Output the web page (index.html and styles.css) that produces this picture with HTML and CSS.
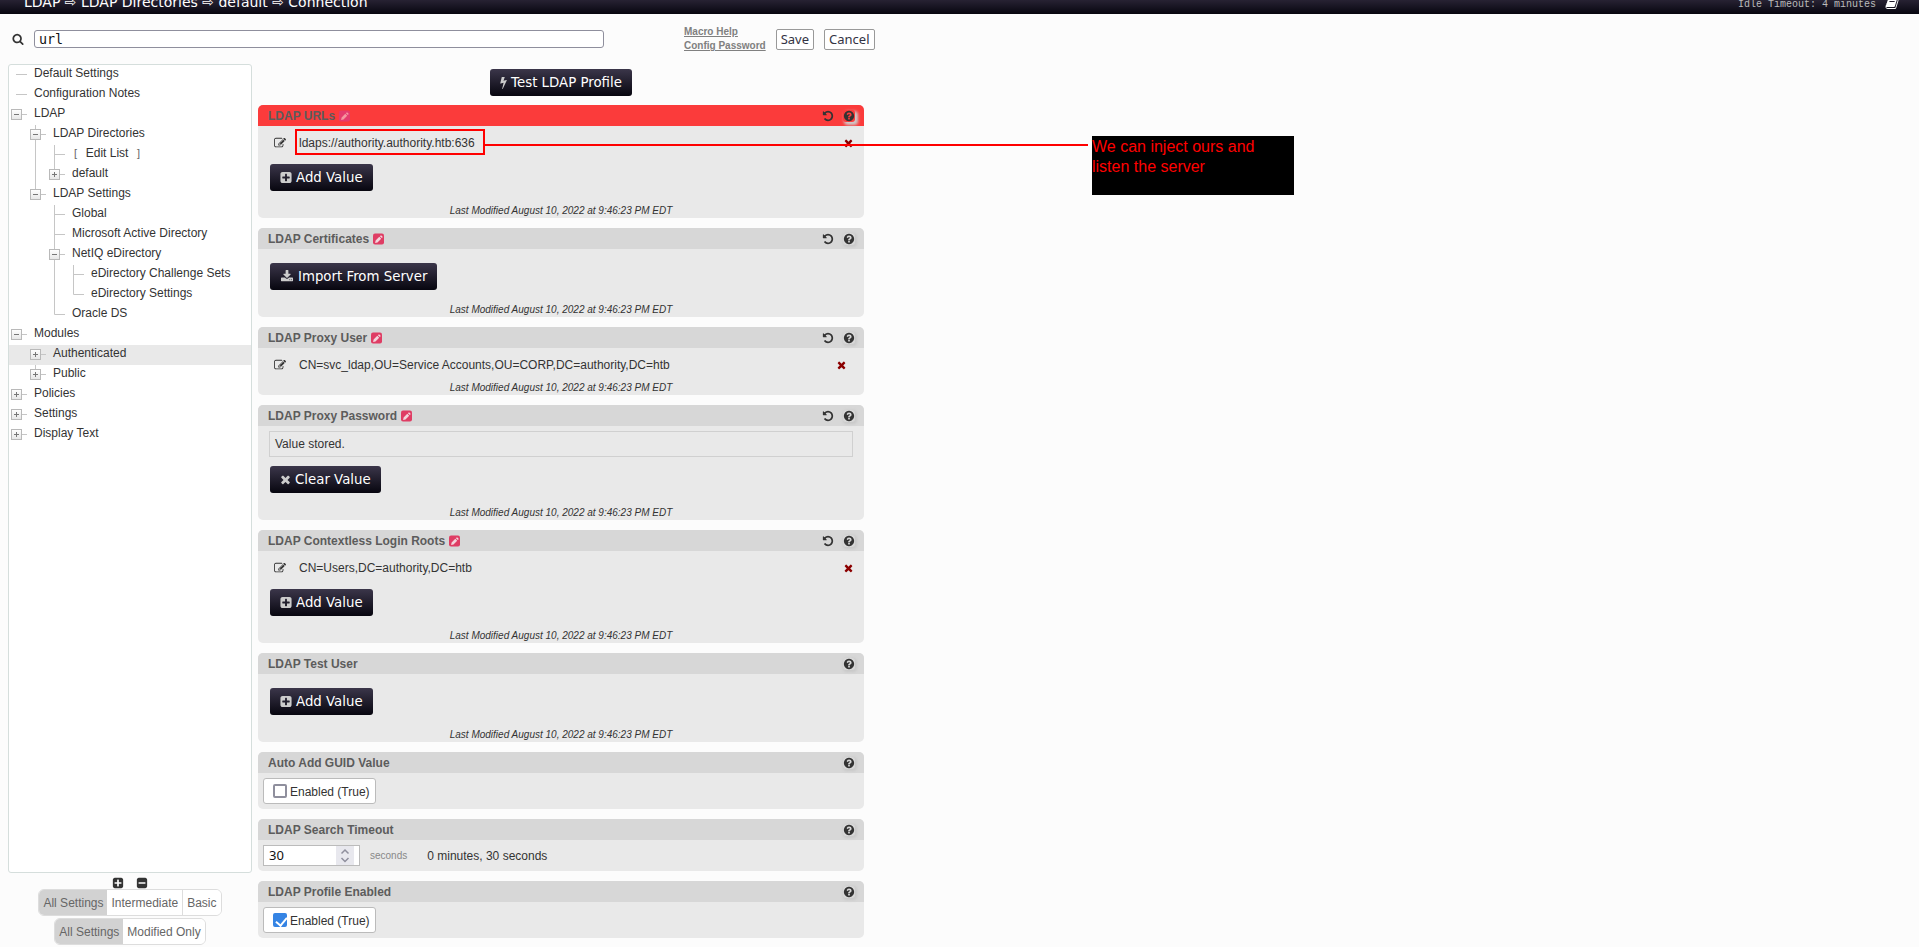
FILE: index.html
```html
<!DOCTYPE html>
<html lang="en">
<head>
<meta charset="utf-8">
<title>Configuration Editor</title>
<link rel="stylesheet" href="styles.css">
</head>
<body>
<svg class="defs" aria-hidden="true">
  <symbol id="search" viewBox="0 0 1792 1792"><path d="M1216 832q0-185-131.500-316.500t-316.500-131.500-316.500 131.500-131.500 316.500 131.500 316.500 316.500 131.500 316.500-131.500 131.500-316.500zm512 832q0 52-38 90t-90 38q-54 0-90-38l-343-342q-179 124-399 124-143 0-273.500-55.500t-225-150-150-225-55.500-273.500 55.500-273.500 150-225 225-150 273.500-55.500 273.500 55.500 225 150 150 225 55.500 273.500q0 220-124 399l343 343q37 37 37 90z"/></symbol>
  <symbol id="times" viewBox="192 0 1408 1792"><path d="M1490 1322q0 40-28 68l-136 136q-28 28-68 28t-68-28l-294-294-294 294q-28 28-68 28t-68-28l-136-136q-28-28-28-68t28-68l294-294-294-294q-28-28-28-68t28-68l136-136q28-28 68-28t68 28l294 294 294-294q28-28 68-28t68 28l136 136q28 28 28 68t-28 68l-294 294 294 294q28 28 28 68z"/></symbol>
  <symbol id="plus-square" viewBox="128 0 1536 1792"><path d="M1408 960v-128q0-26-19-45t-45-19h-320v-320q0-26-19-45t-45-19h-128q-26 0-45 19t-19 45v320h-320q-26 0-45 19t-19 45v128q0 26 19 45t45 19h320v320q0 26 19 45t45 19h128q26 0 45-19t19-45v-320h320q26 0 45-19t19-45zm256-544v960q0 119-84.500 203.500t-203.500 84.500h-960q-119 0-203.500-84.500t-84.500-203.500v-960q0-119 84.500-203.500t203.500-84.500h960q119 0 203.500 84.500t84.500 203.500z"/></symbol>
  <symbol id="minus-square" viewBox="128 0 1536 1792"><path d="M1408 960v-128q0-26-19-45t-45-19h-896q-26 0-45 19t-19 45v128q0 26 19 45t45 19h896q26 0 45-19t19-45zm256-544v960q0 119-84.500 203.500t-203.500 84.500h-960q-119 0-203.500-84.500t-84.500-203.500v-960q0-119 84.500-203.500t203.500-84.500h960q119 0 203.500 84.500t84.500 203.500z"/></symbol>
  <symbol id="undo" viewBox="0 0 1792 1792"><path d="M1664 896q0 156-61 298t-164 245-245 164-298 61q-172 0-327-72.500t-264-204.500q-7-10-6.500-22.500t8.500-20.500l137-138q10-9 25-9 16 2 23 12 73 95 179 147t225 52q104 0 198.500-40.500t163.500-109.500 109.500-163.500 40.500-198.500-40.500-198.500-109.500-163.500-163.500-109.500-198.500-40.500q-98 0-188 35.500t-160 101.500l137 138q31 30 14 69-17 40-59 40h-448q-26 0-45-19t-19-45v-448q0-42 40-59 39-17 69 14l130 129q107-101 244.500-156.500t284.500-55.500q156 0 298 61t245 164 164 245 61 298z"/></symbol>
  <symbol id="help" viewBox="0 0 1792 1792"><path d="M1024 1376v-192q0-14-9-23t-23-9h-192q-14 0-23 9t-9 23v192q0 14 9 23t23 9h192q14 0 23-9t9-23zm256-672q0-88-55.500-163t-138.500-116-170-41q-243 0-371 213-15 24 8 42l132 100q7 6 19 6 16 0 25-12 53-68 86-92 34-24 86-24 48 0 85.500 26t37.500 59q0 38-20 61t-68 45q-63 28-115.500 86.500t-52.500 125.500v36q0 14 9 23t23 9h192q14 0 23-9t9-23q0-19 21.500-49.500t54.500-49.500q32-18 49-28.500t46-35 44.500-48 28-60.500 12.500-81zm384 192q0 209-103 385.500t-279.500 279.500-385.500 103-385.500-103-279.500-279.500-103-385.500 103-385.500 279.500-279.500 385.500-103 385.500 103 279.500 279.500 103 385.500z"/></symbol>
  <symbol id="bolt" viewBox="448 0 896 1792"><path d="M1333 566q18 20 7 44l-540 1157q-13 25-42 25-4 0-14-2-17-5-25.500-19t-4.500-30l197-808-406 101q-4 1-12 1-18 0-31-11-18-15-13-39l201-825q4-14 16-23t28-9h328q19 0 32 12.500t13 29.500q0 8-5 18l-171 463 396-98q8-2 12-2 19 0 34 15z"/></symbol>
  <symbol id="download" viewBox="0 0 1792 1792"><path d="M1344 1344q0-26-19-45t-45-19-45 19-19 45 19 45 45 19 45-19 19-45zm256 0q0-26-19-45t-45-19-45 19-19 45 19 45 45 19 45-19 19-45zm128-224v320q0 40-28 68t-68 28h-1472q-40 0-68-28t-28-68v-320q0-40 28-68t68-28h465l135 136q58 56 136 56t136-56l136-136h464q40 0 68 28t28 68zm-325-569q17 41-14 70l-448 448q-18 19-45 19t-45-19l-448-448q-31-29-14-70 17-39 59-39h256v-448q0-26 19-45t45-19h256q26 0 45 19t19 45v448h256q42 0 59 39z"/></symbol>
  <symbol id="edit" viewBox="0 0 1792 1792"><path d="M888 1184l116-116-152-152-116 116v56h96v96h56zm440-720q-16-16-33 1l-350 350q-17 17-1 33t33-1l350-350q17-17 1-33zm80 594v190q0 119-84.500 203.500t-203.500 84.500h-832q-119 0-203.500-84.500t-84.500-203.500v-832q0-119 84.500-203.500t203.500-84.500h832q63 0 117 25 15 7 18 23 3 17-9 29l-49 49q-14 14-32 8-23-6-45-6h-832q-66 0-113 47t-47 113v832q0 66 47 113t113 47h832q66 0 113-47t47-113v-126q0-13 9-22l64-64q15-15 35-7t20 29zm-96-738l288 288-672 672h-288v-288zm444 132l-92 92-288-288 92-92q28-28 68-28t68 28l152 152q28 28 28 68t-28 68z"/></symbol>
  <symbol id="book" viewBox="0 0 1792 1792"><path d="M1703 478q40 57 18 129l-275 906q-19 64-76.500 107.500t-122.500 43.500h-923q-77 0-148.500-53.500t-99.500-131.500q-24-67-2-127 0-4 3-27t4-37q1-8-3-21.500t-3-19.500q2-11 8-21t16.500-23.500 16.500-23.500q23-38 45-91.500t30-91.500q3-10 .5-30t-.5-28q3-11 17-28t17-23q21-36 42-92t25-90q1-9-2.500-32t.5-28q4-13 22-30.500t22-22.500q19-26 42.500-84.500t27.500-96.500q1-8-3-25.500t-2-26.500q2-8 9-18t18-23 17-21q8-12 16.500-30.500t15-35 16-36 19.500-32 26.500-23.500 36-11.500 47.500 5.500l-1 3q38-9 51-9h761q74 0 114 56t18 130l-274 906q-36 119-71.500 153.500t-128.500 34.500h-869q-27 0-38 15-11 16-1 43 24 70 144 70h923q29 0 56-15.500t35-41.500l300-987q7-22 5-57 38 15 59 43zm-1064 2q-4 13 2 22.500t20 9.500h608q13 0 25.500-9.500t16.500-22.500l21-64q4-13-2-22.500t-20-9.500h-608q-13 0-25.500 9.500t-16.500 22.500zm-83 256q-4 13 2 22.500t20 9.500h608q13 0 25.500-9.500t16.500-22.500l21-64q4-13-2-22.500t-20-9.500h-608q-13 0-25.500 9.500t-16.500 22.500z"/></symbol>
  <symbol id="modified" viewBox="0 0 11 12"><rect y=".5" width="11" height="11" rx="2" fill="#df3d64"/><path class="pencil" d="M2.100 9.900l.5-2.400 3.700-3.700 1.900 1.900-3.700 3.700z M6.900 3.200l.8-.8q.3-.3.600 0l1.300 1.300q.3.300 0 .6l-.8.8z"/></symbol>
  <linearGradient id="box" x2="0" y2="1"><stop offset="0" stop-color="#fff"/><stop offset="1" stop-color="#e6e6e6"/></linearGradient>
  <symbol id="t-end" viewBox="0 0 19 20"><path class="line" d="M5.500 0V9.500H16"/></symbol>
  <symbol id="t-mid" viewBox="0 0 19 20"><path class="line" d="M5.500 0V20M5.500 9.500H16"/></symbol>
  <symbol id="t-bar" viewBox="0 0 19 20"><path class="line" d="M5.500 0V20"/></symbol>
  <symbol id="t-leaf" viewBox="0 0 19 20"><path class="line" d="M5 9.500H16"/></symbol>
  <symbol id="t-minus" viewBox="0 0 19 20"><path class="line" d="M11 9.500H16"/><rect class="toggle" x=".5" y="4.500" width="10" height="10"/><path class="sign" d="M3 9.500H8"/></symbol>
  <symbol id="t-plus" viewBox="0 0 19 20"><path class="line" d="M11 9.500H16"/><rect class="toggle" x=".5" y="4.500" width="10" height="10"/><path class="sign" d="M3 9.500H8M5.500 7V12"/></symbol>
  <symbol id="t-minus-mid" viewBox="0 0 19 20"><path class="line" d="M5.500 0V20"/><use href="#t-minus" width="19" height="20"/></symbol>
  <symbol id="t-minus-end" viewBox="0 0 19 20"><path class="line" d="M5.500 0V5"/><use href="#t-minus" width="19" height="20"/></symbol>
  <symbol id="t-plus-end" viewBox="0 0 19 20"><path class="line" d="M5.500 0V5"/><use href="#t-plus" width="19" height="20"/></symbol>
</svg>

<header class="header">
  <div class="title">LDAP ⇨ LDAP Directories ⇨ default ⇨ Connection</div>
  <div class="idle">Idle Timeout: 4 minutes <svg class="book"><use href="#book"/></svg></div>
</header>

<form class="toolbar">
  <label for="q" aria-label="Search"><svg class="i12"><use href="#search"/></svg></label>
  <input class="query" id="q" type="text" value="url">
  <nav class="links"><a href="#">Macro Help</a><a href="#">Config Password</a></nav>
  <button class="plain" type="button">Save</button>
  <button class="plain" type="button">Cancel</button>
</form>

<main class="main">
  <aside class="sidebar">
    <ul class="tree">
      <li><svg class="g"><use href="#t-leaf"/></svg><a href="#">Default Settings</a></li>
      <li><svg class="g"><use href="#t-leaf"/></svg><a href="#">Configuration Notes</a></li>
      <li><svg class="g"><use href="#t-minus"/></svg><a href="#">LDAP</a></li>
      <li><span class="g"></span><svg class="g"><use href="#t-minus-mid"/></svg><a href="#">LDAP Directories</a></li>
      <li><span class="g"></span><svg class="g"><use href="#t-bar"/></svg><svg class="g"><use href="#t-mid"/></svg><a class="bracket" href="#"><span>[</span>&nbsp; Edit List &nbsp;<span>]</span></a></li>
      <li><span class="g"></span><svg class="g"><use href="#t-bar"/></svg><svg class="g"><use href="#t-plus-end"/></svg><a href="#">default</a></li>
      <li><span class="g"></span><svg class="g"><use href="#t-minus-end"/></svg><a href="#">LDAP Settings</a></li>
      <li><span class="g"></span><span class="g"></span><svg class="g"><use href="#t-mid"/></svg><a href="#">Global</a></li>
      <li><span class="g"></span><span class="g"></span><svg class="g"><use href="#t-mid"/></svg><a href="#">Microsoft Active Directory</a></li>
      <li><span class="g"></span><span class="g"></span><svg class="g"><use href="#t-minus-mid"/></svg><a href="#">NetIQ eDirectory</a></li>
      <li><span class="g"></span><span class="g"></span><svg class="g"><use href="#t-bar"/></svg><svg class="g"><use href="#t-mid"/></svg><a href="#">eDirectory Challenge Sets</a></li>
      <li><span class="g"></span><span class="g"></span><svg class="g"><use href="#t-bar"/></svg><svg class="g"><use href="#t-end"/></svg><a href="#">eDirectory Settings</a></li>
      <li><span class="g"></span><span class="g"></span><svg class="g"><use href="#t-end"/></svg><a href="#">Oracle DS</a></li>
      <li><svg class="g"><use href="#t-minus"/></svg><a href="#">Modules</a></li>
      <li class="hover"><span class="g"></span><svg class="g"><use href="#t-plus"/></svg><a href="#">Authenticated</a></li>
      <li><span class="g"></span><svg class="g"><use href="#t-plus-end"/></svg><a href="#">Public</a></li>
      <li><svg class="g"><use href="#t-plus"/></svg><a href="#">Policies</a></li>
      <li><svg class="g"><use href="#t-plus"/></svg><a href="#">Settings</a></li>
      <li><svg class="g"><use href="#t-plus"/></svg><a href="#">Display Text</a></li>
    </ul>
    <div class="expanders">
      <button class="icon" type="button" aria-label="Expand all"><svg class="i12"><use href="#plus-square"/></svg></button>
      <button class="icon" type="button" aria-label="Collapse all"><svg class="i12"><use href="#minus-square"/></svg></button>
    </div>
    <div class="group"><button class="on" type="button">All Settings</button><button type="button">Intermediate</button><button type="button">Basic</button></div>
    <div class="group"><button class="on" type="button">All Settings</button><button type="button">Modified Only</button></div>
  </aside>

  <div class="settings">
    <button class="dark test" type="button"><svg class="w7"><use href="#bolt"/></svg>Test LDAP Profile</button>

    <section class="card marked">
      <h2>LDAP URLs <svg class="mod"><use href="#modified"/></svg><span class="tools"><button class="icon" type="button" aria-label="Reset"><svg class="i12"><use href="#undo"/></svg></button><button class="icon help" type="button" aria-label="Help"><svg class="i12"><use href="#help"/></svg></button></span></h2>
      <div class="value"><button class="icon" type="button" aria-label="Edit"><svg class="i12"><use href="#edit"/></svg></button><span>ldaps://authority.authority.htb:636</span><button class="icon delete" type="button" aria-label="Delete"><svg class="x"><use href="#times"/></svg></button></div>
      <div class="action after-value"><button class="dark" type="button"><svg class="w12"><use href="#plus-square"/></svg>Add Value</button></div>
      <p class="date">Last Modified August 10, 2022 at 9:46:23 PM EDT</p>
    </section>

    <section class="card">
      <h2>LDAP Certificates <svg class="mod"><use href="#modified"/></svg><span class="tools"><button class="icon" type="button" aria-label="Reset"><svg class="i12"><use href="#undo"/></svg></button><button class="icon help" type="button" aria-label="Help"><svg class="i12"><use href="#help"/></svg></button></span></h2>
      <div class="action alone"><button class="dark" type="button"><svg class="w14"><use href="#download"/></svg>Import From Server</button></div>
      <p class="date">Last Modified August 10, 2022 at 9:46:23 PM EDT</p>
    </section>

    <section class="card">
      <h2>LDAP Proxy User <svg class="mod"><use href="#modified"/></svg><span class="tools"><button class="icon" type="button" aria-label="Reset"><svg class="i12"><use href="#undo"/></svg></button><button class="icon help" type="button" aria-label="Help"><svg class="i12"><use href="#help"/></svg></button></span></h2>
      <div class="value single"><button class="icon" type="button" aria-label="Edit"><svg class="i12"><use href="#edit"/></svg></button><span>CN=svc_ldap,OU=Service Accounts,OU=CORP,DC=authority,DC=htb</span><button class="icon delete" type="button" aria-label="Delete"><svg class="x"><use href="#times"/></svg></button></div>
      <p class="date">Last Modified August 10, 2022 at 9:46:23 PM EDT</p>
    </section>

    <section class="card">
      <h2>LDAP Proxy Password <svg class="mod"><use href="#modified"/></svg><span class="tools"><button class="icon" type="button" aria-label="Reset"><svg class="i12"><use href="#undo"/></svg></button><button class="icon help" type="button" aria-label="Help"><svg class="i12"><use href="#help"/></svg></button></span></h2>
      <div class="stored">Value stored.</div>
      <div class="action after-field"><button class="dark" type="button"><svg class="w11"><use href="#times"/></svg>Clear Value</button></div>
      <p class="date">Last Modified August 10, 2022 at 9:46:23 PM EDT</p>
    </section>

    <section class="card">
      <h2>LDAP Contextless Login Roots <svg class="mod"><use href="#modified"/></svg><span class="tools"><button class="icon" type="button" aria-label="Reset"><svg class="i12"><use href="#undo"/></svg></button><button class="icon help" type="button" aria-label="Help"><svg class="i12"><use href="#help"/></svg></button></span></h2>
      <div class="value"><button class="icon" type="button" aria-label="Edit"><svg class="i12"><use href="#edit"/></svg></button><span>CN=Users,DC=authority,DC=htb</span><button class="icon delete" type="button" aria-label="Delete"><svg class="x"><use href="#times"/></svg></button></div>
      <div class="action after-value"><button class="dark" type="button"><svg class="w12"><use href="#plus-square"/></svg>Add Value</button></div>
      <p class="date">Last Modified August 10, 2022 at 9:46:23 PM EDT</p>
    </section>

    <section class="card">
      <h2>LDAP Test User<span class="tools"><button class="icon help" type="button" aria-label="Help"><svg class="i12"><use href="#help"/></svg></button></span></h2>
      <div class="action alone"><button class="dark" type="button"><svg class="w12"><use href="#plus-square"/></svg>Add Value</button></div>
      <p class="date">Last Modified August 10, 2022 at 9:46:23 PM EDT</p>
    </section>

    <section class="card">
      <h2>Auto Add GUID Value<span class="tools"><button class="icon help" type="button" aria-label="Help"><svg class="i12"><use href="#help"/></svg></button></span></h2>
      <div class="field"><label class="check"><input type="checkbox">Enabled (True)</label></div>
    </section>

    <section class="card">
      <h2>LDAP Search Timeout<span class="tools"><button class="icon help" type="button" aria-label="Help"><svg class="i12"><use href="#help"/></svg></button></span></h2>
      <div class="field">
        <div class="number"><input id="timeout" type="number" value="30"><svg class="spin" viewBox="0 0 18 19"><path d="M5.500 7.500L9 4l3.500 3.500M5.500 12L9 15.500l3.500-3.500"/></svg></div>
        <label class="unit" for="timeout">seconds</label>
        <span>0 minutes, 30 seconds</span>
      </div>
    </section>

    <section class="card">
      <h2>LDAP Profile Enabled<span class="tools"><button class="icon help" type="button" aria-label="Help"><svg class="i12"><use href="#help"/></svg></button></span></h2>
      <div class="field"><label class="check"><input type="checkbox" checked>Enabled (True)</label></div>
    </section>
  </div>

  <div class="note-frame"></div>
  <div class="note-line"></div>
  <div class="note">We can inject ours and listen the server</div>
</main>
</body>
</html>
```
FILE: styles.css
```css
* { box-sizing: border-box; }

body {
  margin: 0;
  min-height: 100vh;
  display: flex;
  flex-direction: column;
  background: #fcfcfc;
  color: #333;
  font: 12px/20px "Liberation Sans", Arial, sans-serif;
}

svg { display: block; fill: currentColor; flex: none; }
a { color: inherit; text-decoration: none; }
p, h2, ul { margin: 0; padding: 0; }

.defs { position: absolute; width: 0; height: 0; }
.pencil { fill: #f3d5dc; }
.line { fill: none; stroke: #c6c6c6; }
.toggle { fill: url(#box); stroke: #b9b9b9; }
.sign { fill: none; stroke: #777; }

.i12 { width: 12px; height: 12px; }
.w7 { width: 7px; height: 13px; }
.w11 { width: 11px; height: 13px; }
.w12 { width: 12px; height: 13px; }
.w14 { width: 14px; height: 13px; }
.x { width: 9px; height: 12px; }

/* header bar */
.header {
  height: 14px;
  padding: 0 20px 2px 24px;
  overflow: hidden;
  display: flex;
  justify-content: space-between;
  align-items: flex-end;
  background: linear-gradient(#272233, #07060f);
  color: #fff;
}
.title { font: 14px/20px "DejaVu Sans", sans-serif; }
.idle {
  display: flex;
  gap: 9px;
  align-items: flex-end;
  color: #bbb;
  font: 10px/14px "Liberation Mono", monospace;
}
.book { width: 14px; height: 14px; margin-bottom: 2px; color: #fff; }

/* search and save */
.toolbar {
  display: flex;
  align-items: center;
  gap: 10px;
  padding: 11px 12px;
}
.query {
  width: 570px;
  height: 18px;
  padding: 0 4px;
  border: 1px solid #8f8f9d;
  border-radius: 3px;
  background: #fff;
  color: #111;
  font-family: "DejaVu Sans Mono", monospace;
}
.links {
  display: flex;
  flex-direction: column;
  margin-left: 70px;
  color: #808080;
  font-size: 10px;
  font-weight: bold;
  line-height: 14px;
}
.links a { text-decoration: underline; }
.plain {
  height: 21px;
  padding: 0 4px;
  border: 1px solid #999;
  border-radius: 2px;
  background: #fff;
  color: #333344;
  font: 13px/19px "Noto Sans", sans-serif;
}

.main {
  position: relative;
  flex: 1;
  display: grid;
  grid-template-columns: 244px minmax(0, 606px);
  gap: 6px;
  padding-left: 8px;
}

/* navigation tree */
.sidebar {
  display: flex;
  flex-direction: column;
  align-items: center;
  padding-bottom: 2px;
}
.tree {
  flex: 1;
  align-self: stretch;
  border: 1px solid #d5dedc;
  border-radius: 3px;
  background: #fff;
  list-style: none;
}
.tree li { display: flex; height: 20px; padding-left: 2px; }
.tree a { padding-left: 4px; line-height: 17px; white-space: nowrap; }
.tree .hover { background: #e9e9e9; }
.g { width: 19px; height: 20px; }
.bracket span { padding: 0 2px; font-size: 11px; color: #666; }

.expanders { display: flex; gap: 12px; padding: 4px 0 0; }
.icon {
  display: block;
  padding: 0;
  border: 0;
  background: none;
  color: #333;
}
.group {
  display: flex;
  height: 27px;
  margin-bottom: 2px;
  border: 1px solid #ddd;
  border-radius: 6px;
  overflow: hidden;
}
.group:last-child { margin-bottom: 0; }
.group button {
  padding: 0 4px;
  border: 0;
  background: #fff;
  color: #666;
  font: inherit;
}
.group button + button { border-left: 1px solid #ddd; }
.group .on { background: #d2d2d2; }
.group .on + button { border-left: 0; }

/* setting cards */
.settings {
  display: flex;
  flex-direction: column;
  gap: 10px;
  padding: 5px 0 9px;
}
.dark {
  display: inline-flex;
  align-items: center;
  gap: 4px;
  height: 27px;
  padding: 0 10px;
  border: 0;
  border-radius: 3px;
  background: linear-gradient(#3b364a, #07060f);
  color: #fff;
  font-family: "DejaVu Sans", sans-serif;
  white-space: nowrap;
}
.dark svg { color: #ccc; }
.test { align-self: center; margin-bottom: -1px; }

.card {
  border-radius: 5px;
  background: #e9e9e9;
  overflow: hidden;
}
.card h2 {
  display: flex;
  align-items: center;
  gap: 4px;
  height: 21px;
  padding: 0 9px 0 10px;
  background: #d7d7d7;
  color: #5c5c5c;
  font-size: 12px;
}
.marked h2 { background: #fb3b3b; }
.marked .mod { opacity: .6; }
.marked .mod { filter: hue-rotate(-20deg); }
.mod { width: 11px; height: 12px; }
.tools { display: flex; gap: 9px; margin-left: auto; }
.help { border-radius: 3px; box-shadow: 1px 1px 3px 1px #c8c8c8; }
.marked .help { background: #fb3b3b; box-shadow: 2px 2px 3px 1px #ccc; }

.value {
  display: flex;
  align-items: center;
  gap: 13px;
  height: 33px;
  padding: 0 11px 0 16px;
}
.single { padding-right: 18px; }
.value .delete { margin-left: auto; color: #8b0000; }
.action { display: flex; padding: 0 12px 12px; }
.after-value { padding-top: 5px; }
.after-field { padding-top: 9px; }
.alone { padding-top: 14px; }
.date {
  padding-top: 1px;
  font-size: 10px;
  font-style: italic;
  line-height: 14px;
  text-align: center;
}
.single + .date { margin-top: -1px; }
.stored {
  height: 26px;
  margin: 5px 11px 0;
  padding: 0 5px;
  border: 1px solid #d0d0d0;
  line-height: 24px;
}
.field { display: flex; align-items: center; padding: 5px; }
.check {
  display: flex;
  align-items: center;
  gap: 3px;
  height: 26px;
  padding: 1px 5px 0 9px;
  border: 1px solid #bbb;
  border-radius: 3px;
  background: #fff;
}
.check input {
  appearance: none;
  width: 14px;
  height: 14px;
  margin: 0 0 1px;
  border: 2px solid #8f8f9d;
  border-radius: 2px;
  background: #fff;
}
.check input:checked {
  position: relative;
  border-color: #3584e4;
  background: #3584e4;
}
.check input:checked::after {
  content: "";
  position: absolute;
  left: 3px;
  top: 0;
  width: 5px;
  height: 9px;
  border: solid #fff;
  border-width: 0 2px 2px 0;
  transform: rotate(40deg);
}
.number {
  display: flex;
  align-items: center;
  width: 97px;
  height: 21px;
  padding-right: 5px;
  border: 1px solid #bbb;
  background: #fff;
}
.number input {
  appearance: textfield;
  flex: 1;
  min-width: 0;
  padding: 0 5px;
  border: 0;
  background: none;
  color: #111;
  font: 13px/17px "Noto Sans", sans-serif;
}
.number input::-webkit-inner-spin-button { display: none; }
.spin { width: 18px; height: 19px; background: #e8e8ee; fill: none; stroke: #8f8f9d; stroke-width: 1.5px; }
.unit { margin: 0 20px 0 10px; color: #888; font-size: 10px; }

/* annotation laid over the page */
.note-frame, .note-line, .note { position: absolute; }
.note-frame { left: 295px; top: 65px; width: 190px; height: 26px; border: 2px solid #f00; }
.note-line { left: 485px; top: 80px; width: 603px; height: 2px; background: #f00; }
.note {
  left: 1092px;
  top: 72px;
  width: 202px;
  height: 59px;
  padding: 1px 20px 0 0;
  background: #000;
  color: #f00;
  font-size: 16px;
}
```
